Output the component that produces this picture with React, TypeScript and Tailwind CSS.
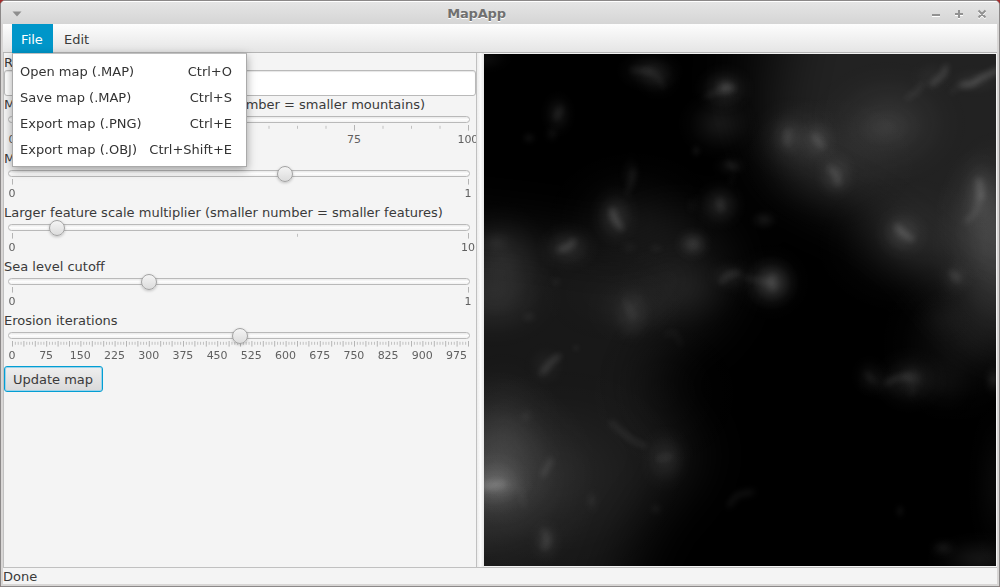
import React from "react";

type Tick = { at: number; major: boolean };
type SliderProps = {
  label: React.ReactNode;
  value?: number;
  ticks: Tick[];
  labels: { at: number; text: string }[];
};

function makeTicks(count: number, majorEvery: number): Tick[] {
  return Array.from({ length: count + 1 }, (_, i) => ({ at: i / count, major: i % majorEvery === 0 }));
}

const AXIS = 456;

function SliderRow({ label, value, ticks, labels }: SliderProps) {
  return (
    <div className="flex h-[54px] flex-col">
      <div className="h-[17px] whitespace-nowrap leading-[17px]">{label}</div>
      <div className="relative h-[37px] pl-[4px] pt-[3px]">
        <div className="h-[7px] w-[462px] rounded-full border border-[#b9b9b9] bg-gradient-to-b from-[#e9e9e9] via-[#fdfdfd] to-[#f2f2f2]" />
        <svg className="absolute left-[8px] top-3 h-[6px] w-[458px]" viewBox="0 0 458 6">
          {ticks.map((t) => (
            <line
              key={t.at}
              x1={t.at * AXIS + 0.5}
              x2={t.at * AXIS + 0.5}
              y1={t.major ? 0 : 0.8}
              y2={t.major ? 5.6 : 3.8}
              stroke={t.major ? "#b4b4b4" : "#c0c0c0"}
            />
          ))}
        </svg>
        <div className="absolute left-[8px] top-[21px] h-3 w-[456px] text-[11px] leading-3 tracking-[-0.05px] text-[#606060]">
          {labels.map((l) => (
            <span key={l.text} className="absolute -translate-x-1/2" style={{ left: l.at * AXIS - 0.1 }}>
              {l.text}
            </span>
          ))}
        </div>
        {value !== undefined && (
          <div
            className="absolute top-[-1px] h-4 w-4 rounded-full border border-[#a2a2a2] bg-gradient-to-b from-[#f4f4f4] to-[#dcdcdc] shadow-[0_1px_3px_rgba(0,0,0,0.22)]"
            style={{ left: value * AXIS - 0.3 }}
          />
        )}
      </div>
    </div>
  );
}

/* Wide soft regions: polygon points, brightness */
const regions: [string, number][] = [
  ["320,-80 600,-80 600,300 500,290 455,240 435,205 390,165 335,150 290,120 290,60", 24],
  ["260,-80 600,-80 600,250 480,230 400,190 340,130 290,120 250,40", 12],
  ["-80,165 60,180 140,195 190,160 230,180 250,215 225,270 170,300 160,340 220,400 160,470 110,600 -80,600", 24],
];

/* cx, cy, rx, ry, brightness */
const glows: number[][] = [
  [405, 70, 80, 65, 20], [400, 74, 40, 26, 10], [512, 195, 65, 120, 34], [500, 160, 50, 70, 18],
  [345, 110, 90, 70, 12], [310, 85, 50, 45, 18], [475, 290, 80, 80, 16], [420, 190, 90, 70, 18],
  [18, 205, 55, 60, 22], [10, 245, 70, 50, 20], [130, 240, 90, 60, 4], [150, 165, 90, 70, 14],
  [150, 255, 50, 40, 12], [200, 235, 70, 50, 12], [75, 420, 130, 110, 14], [180, 340, 90, 90, 4],
  [0, 425, 115, 110, 42], [20, 385, 60, 90, 18], [12, 430, 38, 32, 44], [0, 432, 55, 12, 16],
  [240, 35, 32, 28, 30], [242, 33, 14, 12, 26], [235, 70, 42, 36, 22], [166, 17, 34, 22, 26],
  [174, 27, 24, 20, 12], [74, 60, 18, 24, 20], [45, 84, 10, 9, 11], [68, 80, 10, 11, 10], [212, 97, 8, 9, 11],
  [247, 112, 20, 14, 14], [131, 162, 26, 32, 30], [147, 120, 14, 24, 10], [84, 193, 32, 26, 28],
  [209, 190, 20, 18, 36], [236, 151, 28, 28, 30], [280, 166, 17, 13, 18], [288, 229, 28, 28, 46],
  [285, 228, 42, 40, 14], [246, 222, 26, 20, 18], [304, 82, 22, 26, 16], [334, 86, 22, 26, 22],
  [352, 121, 24, 28, 24], [418, 179, 28, 28, 28], [496, 137, 22, 40, 20], [472, 223, 18, 20, 16],
  [148, 260, 24, 36, 16], [458, 265, 34, 28, 6], [182, 405, 28, 34, 22], [426, 326, 38, 34, 24],
  [428, 324, 15, 15, 18], [386, 322, 20, 22, 13], [400, 330, 30, 18, 8], [62, 487, 18, 24, 20],
  [108, 447, 10, 14, 10], [172, 455, 9, 9, 8], [416, 457, 8, 10, 9], [459, 494, 16, 12, 16],
  [496, 505, 55, 28, 20], [510, 326, 12, 18, 22], [512, 430, 30, 90, 9], [12, 188, 20, 15, 12],
  [72, 228, 10, 10, 7], [45, 263, 12, 10, 9], [92, 294, 8, 8, 7], [0, 5, 30, 15, 12],
  [248, 126, 8, 9, 5], [42, 362, 10, 10, 9], [460, 330, 40, 40, 8],
  [62, 312, 24, 26, 10], [145, 193, 14, 11, 7], [172, 194, 12, 9, 7], [208, 151, 10, 14, 6],
  [448, 22, 24, 20, 8], [492, 27, 34, 18, 10],
];

/* path, stroke width, brightness */
const ridges: [string, number, number][] = [
  ["M148 16 L166 17", 3, 22], ["M164 17 L173 21 L180 34", 3, 12], ["M222 42 L238 36 L250 34", 4, 16],
  ["M77 54 L72 64", 4, 14], ["M150 116 L147 128 L143 140", 4, 12], ["M128 156 L130 164 L137 174", 4, 36],
  ["M75 196 L84 193 L90 187", 4, 30], ["M236 147 L237 155", 5, 16], ["M237 228 L245 220 L255 219", 3, 28],
  ["M262 224 L284 228 L290 222", 4, 14], ["M288 228 L289 234", 5, 16], ["M304 77 L303 90", 4, 18],
  ["M330 82 L338 92", 5, 20], ["M346 114 L353 121 L354 130", 4, 26],
  ["M423 44 L433 38 L438 30", 3, 22], ["M448 30 L460 20 L462 13", 4, 34],
  ["M467 39 L476 31", 3, 14], ["M478 31 L488 30 L497 24 L514 16", 4, 46],
  ["M413 172 L418 179 L428 185", 4, 34], ["M495 127 L497 142", 6, 26], ["M496 142 L492 158 L482 168", 3, 28],
  ["M468 219 L474 225", 4, 22], ["M75 302 L68 307 L58 319", 4, 30], ["M127 368 L135 376 L148 386 L161 392", 3, 24],
  ["M67 406 L59 421", 4, 24], ["M174 405 L187 402", 4, 12], ["M60 477 L64 486 L60 494", 4, 18],
  ["M382 319 L390 328", 4, 12], ["M403 329 L412 324 L424 322", 4, 22], ["M426 339 L430 337", 5, 10],
  ["M181 281 L191 277 L197 292", 3, 11], ["M245 451 L253 441 L268 438", 4, 16], ["M3 432 L18 430", 7, 20],
  ["M141 247 L149 263", 4, 9], ["M243 109 L252 114", 4, 12], ["M37 436 L40 452", 5, 8],
];

function HeightMap() {
  return (
    <svg className="block h-[512px] w-[512px] bg-black" viewBox="0 0 512 512">
      <defs>
        <radialGradient id="glow">
          <stop offset="0" stopColor="#fff" stopOpacity="1" />
          <stop offset="0.2" stopColor="#fff" stopOpacity="0.84" />
          <stop offset="0.45" stopColor="#fff" stopOpacity="0.48" />
          <stop offset="0.7" stopColor="#fff" stopOpacity="0.16" />
          <stop offset="1" stopColor="#fff" stopOpacity="0" />
        </radialGradient>
        <filter id="wide" x="-150" y="-150" width="812" height="812" filterUnits="userSpaceOnUse" colorInterpolationFilters="sRGB">
          <feGaussianBlur stdDeviation="27" />
        </filter>
        <filter id="soft" x="-20" y="-20" width="552" height="552" filterUnits="userSpaceOnUse" colorInterpolationFilters="sRGB">
          <feGaussianBlur stdDeviation="3" />
        </filter>
      </defs>
      <g filter="url(#wide)">
        {regions.map(([points, v], i) => (
          <polygon key={i} points={points} fill="#fff" opacity={v / 255} />
        ))}
      </g>
      {glows.map(([cx, cy, rx, ry, v], i) => (
        <ellipse key={i} cx={cx} cy={cy} rx={rx} ry={ry} fill="url(#glow)" opacity={v / 255} />
      ))}
      <g filter="url(#soft)" fill="none" stroke="#fff" strokeLinecap="round" strokeLinejoin="round">
        {ridges.map(([d, w, v], i) => (
          <path key={i} d={d} strokeWidth={w} opacity={(v * 1.4) / 255} />
        ))}
      </g>
    </svg>
  );
}

const menuItems = [
  ["Open map (.MAP)", "Ctrl+O"],
  ["Save map (.MAP)", "Ctrl+S"],
  ["Export map (.PNG)", "Ctrl+E"],
  ["Export map (.OBJ)", "Ctrl+Shift+E"],
];

const erosionLabels = Array.from({ length: 14 }, (_, i) => ({ at: (i * 75) / 1000, text: String(i * 75) }));

export default function App() {
  return (
    <div className="h-[587px] w-[1000px] bg-[#a52a2a] font-['DejaVu_Sans',sans-serif] text-[13px] text-[#3a3a3a]">
      <div className="flex h-full flex-col overflow-hidden rounded-t-[5px] border border-[#8b8888] bg-[#d8d6d5]">
        <header className="flex h-[23px] shrink-0 items-center border-t border-white bg-gradient-to-b from-[#e5e5e5] to-[#d5d5d5] pl-[11px] pr-[12px] pt-px">
          <svg className="h-[6px] w-[10px]" viewBox="0 0 10 6">
            <path d="M0.5 0.5h9L5 5.5z" fill="#8e8e8e" />
          </svg>
          <div className="flex-1 pt-px text-center">
            <span className="text-[13px] font-bold tracking-[-0.2px] text-[#707070] [text-shadow:0_1px_0_#fff]">MapApp</span>
          </div>
          <svg className="h-[12px] w-[56px]" viewBox="0 0 56 12" fill="none" strokeWidth="2">
            <g stroke="#fff" transform="translate(0 1)">
              <path d="M1 7h8M24 6h8M28 2v8M47.5 2.5l7 7M54.5 2.5l-7 7" />
            </g>
            <path d="M1 7h8M24 6h8M28 2v8M47.5 2.5l7 7M54.5 2.5l-7 7" stroke="#929292" />
          </svg>
        </header>

        <div className="mx-[2px] mb-[2px] flex min-h-0 flex-1 flex-col bg-[#f4f4f4]">
          <nav className="relative flex h-[29px] shrink-0 border-b border-[#b5b5b5] bg-gradient-to-b from-[#fdfdfd] to-[#e5e5e5] pl-[9px]">
            <div className="h-[29px] w-[41px] bg-[#0096c9] pr-px text-center leading-[31px] text-white">File</div>
            <div className="pl-[11px] leading-[31px]">Edit</div>
            <div className="absolute left-[9px] top-[29px] z-10 flex w-[235px] flex-col border border-[#aaa] border-t-[#c0c0c0] bg-white pb-[3px] pt-[5px] shadow-[0_3px_9px_rgba(0,0,0,0.35)]">
              {menuItems.map(([name, keys]) => (
                <div key={name} className="flex h-[26px] items-center justify-between whitespace-nowrap pl-[7px] pr-[14px] text-[#333]">
                  <span>{name}</span>
                  <span>{keys}</span>
                </div>
              ))}
            </div>
          </nav>

          <main className="flex h-[514px] shrink-0">
            <section className="flex w-[474px] shrink-0 flex-col overflow-hidden border-x border-[#c0c0c0]">
              <div className="h-[17px] leading-[19px]">R</div>
              <div className="h-[26px] w-[472px] shrink-0 rounded-[3px] border border-[#b9b9b9] bg-white shadow-[inset_0_1px_1px_#e6e6e6]" />
              <SliderRow
                label={
                  <div className="flex w-[421px] justify-between">
                    <span>M</span>
                    <span>mber = smaller mountains)</span>
                  </div>
                }
                ticks={makeTicks(16, 4)}
                labels={[{ at: 0, text: "0" }, { at: 0.75, text: "75" }, { at: 1, text: "100" }]}
              />
              <SliderRow label="M" value={0.6} ticks={makeTicks(1, 1)} labels={[{ at: 0, text: "0" }, { at: 1, text: "1" }]} />
              <SliderRow
                label="Larger feature scale multiplier (smaller number = smaller features)"
                value={0.1}
                ticks={[{ at: 0, major: true }, { at: 0.625, major: false }, { at: 1, major: true }]}
                labels={[{ at: 0, text: "0" }, { at: 1, text: "10" }]}
              />
              <SliderRow label="Sea level cutoff" value={0.3} ticks={makeTicks(1, 1)} labels={[{ at: 0, text: "0" }, { at: 1, text: "1" }]} />
              <SliderRow label="Erosion iterations" value={0.5} ticks={makeTicks(160, 4)} labels={erosionLabels} />
              <button className="h-[26px] w-[99px] whitespace-nowrap rounded-[3px] border border-[#039ed3] bg-gradient-to-b from-[#efefef] to-[#d9d9d9] pr-px text-center leading-[25px] shadow-[inset_0_0_0_1px_#9bd3ea]">
                Update map
              </button>
            </section>
            <div className="w-[7px] shrink-0 bg-gradient-to-r from-[#ececec] via-[#fbfbfb] to-[#e8e8e8]" />
            <div className="pt-px">
              <HeightMap />
            </div>
          </main>

          <footer className="min-h-0 flex-1 border-t border-[#c0c0c0] leading-[17px]">Done</footer>
        </div>
      </div>
    </div>
  );
}
